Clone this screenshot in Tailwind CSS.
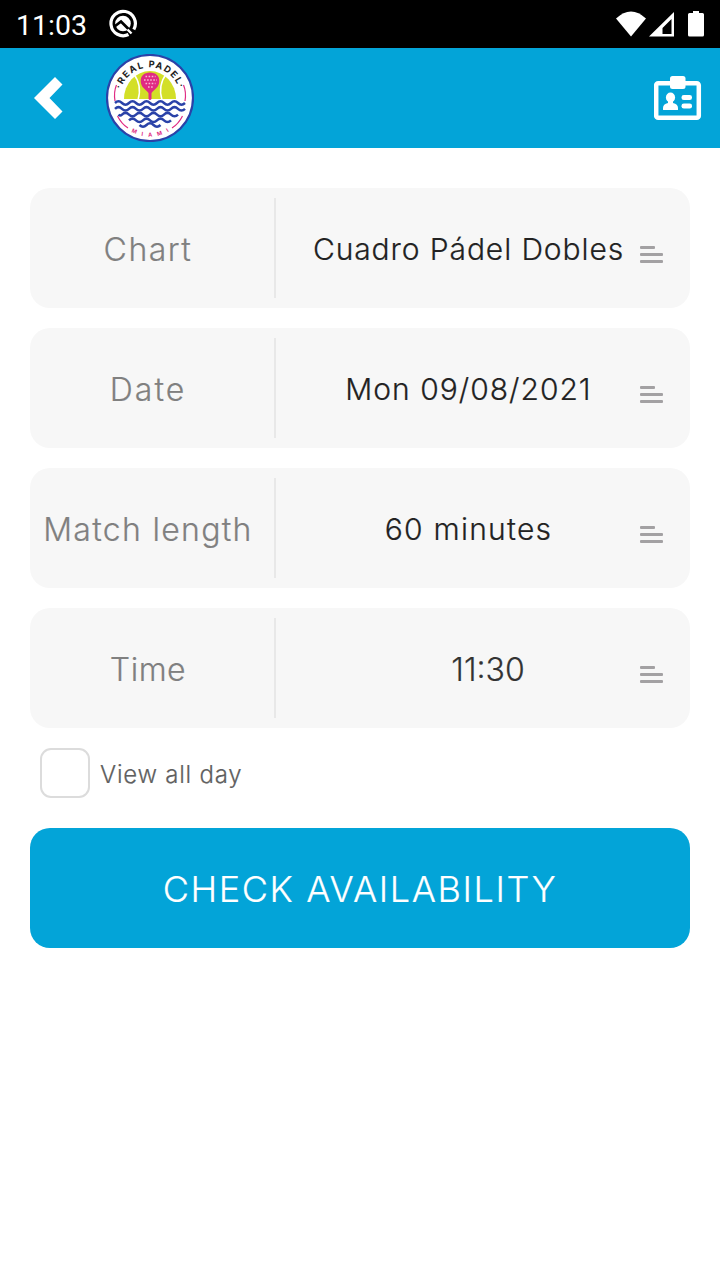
<!DOCTYPE html>
<html lang="en">
<head>
  <meta charset="UTF-8" />
  <meta name="viewport" content="width=device-width, initial-scale=1.0" />
  <title>Real Padel Miami</title>
  <script src="https://cdn.jsdelivr.net/npm/@tailwindcss/browser@4"></script>
</head>
<body class="bg-white min-h-screen flex flex-col font-['Inter',sans-serif]">
  <!-- Status bar -->
  <div class="h-12 bg-black flex items-center justify-between pl-4 pr-[14px] text-white">
    <div class="flex items-center">
      <span class="w-[92px] pt-[4px] text-[28.5px] leading-none font-['Roboto',sans-serif]">11:03</span>
      <svg class="w-[30px] h-[30px]" viewBox="0 0 30 30" fill="none">
        <path d="M20.500 25.500A12.200 12.200 0 1 1 25.800 20.500" stroke="#fff" stroke-width="3.200" />
        <circle cx="15" cy="14.500" r="7.800" fill="#fff" />
        <path d="M6.500 17.500L13 12.500L22 21.500" stroke="#000" stroke-width="2.800" />
        <path d="M19.500 20.500l4 4" stroke="#fff" stroke-width="2.400" />
      </svg>
    </div>
    <svg class="w-[90px] h-[28px]" viewBox="0 0 90 28" fill="#fff">
      <path d="M0 8.500Q15 -5.500 30 8.500L15 26.500z" />
      <path fill-rule="evenodd" d="M58 2V26.500H33zM55.500 9L46.500 18V24H55.500z" />
      <path d="M77 1h6v2h3.500q1.500 0 1.500 1.500V25q0 1.500-1.500 1.500h-13q-1.500 0-1.500-1.500V4.500q0-1.500 1.500-1.500H77z" />
    </svg>
  </div>

  <!-- App header -->
  <header class="h-[100px] bg-[#03a4d8] flex items-center pl-[34px] pr-[18px]">
    <svg class="w-[30px] h-[42px]" viewBox="0 0 30 42" fill="#fff">
      <path d="M21 0L28.500 7.500L15.500 21L28.500 34.500L21 42L0 21z" />
    </svg>
    <svg class="w-[88px] h-[88px] ml-[42px]" viewBox="0 0 88 88" fill="none">
      <defs>
        <path id="arcTop" d="M13.500 44A30.500 30.500 0 0 1 74.500 44" />
        <path id="arcBottom" d="M5.500 44A38.500 38.500 0 0 0 82.500 44" />
      </defs>
      <circle cx="44" cy="44" r="43" fill="#fff" stroke="#2a42a8" stroke-width="2.200" />
      <path d="M18 45A26 28 0 0 1 70 45z" fill="#d3df27" />
      <path d="M27 19Q36.500 31 32 46M61 19Q51.500 31 56 46" stroke="#fff" stroke-width="1.500" />
      <!-- racket -->
      <path d="M44 18.500c-6 0-9.300 3.500-9.300 8.500c0 6 4.500 8 7.800 12v6q1.500 2 3 0v-6c3.300-4 7.800-6 7.800-12c0-5-3.300-8.500-9.300-8.500z" fill="#e02a83" />
      <path d="M39.500 22.500h10M38 26h13M39.500 29.500h10M42 33h5" stroke="#f7b9d5" stroke-width="1.600" stroke-dasharray="1.600 1.500" />
      <!-- sea -->
      <g stroke="#2a42a8" stroke-width="2.500">
        <path d="M9 49q3.500-3.400 7 0t7 0t7 0t7 0t7 0t7 0t7 0t7 0t7 0t7 0" />
        <path d="M9 54.800q3.500-3.400 7 0t7 0t7 0t7 0t7 0t7 0t7 0t7 0t7 0t7 0" />
        <path d="M12.500 60.600q1.750 1.700 3.500 0q3.500-3.400 7 0t7 0t7 0t7 0t7 0t7 0t7 0t7 0" />
        <path d="M23 66.300q3.500-3.400 7 0t7 0t7 0t7 0t7 0t7 0" />
        <path d="M33.500 71q3.500 3.400 7 0t7 0t7 0" />
      </g>
      <path d="M10.500 31Q7.500 38 9 47M77.500 31Q80.500 38 79 47M11.500 62q4 8 10.500 12M76.500 62q-4 8-10.500 12" stroke="#e02a83" stroke-width="1.200" />
      <text class="font-['Inter',sans-serif] font-bold" font-size="9.200" fill="#222" text-anchor="middle" letter-spacing="1.400"><textPath href="#arcTop" startOffset="50%">·REAL PADEL·</textPath></text>
      <text class="font-['Inter',sans-serif] font-bold" font-size="5.500" fill="#e02a83" text-anchor="middle" letter-spacing="5.500"><textPath href="#arcBottom" startOffset="52.500%">MIAMI</textPath></text>
    </svg>
    <svg class="w-12 h-[46px] ml-auto" viewBox="0 0 48 46" fill="#fff">
      <rect x="2.200" y="8.200" width="42.600" height="34.600" rx="2" fill="none" stroke="#fff" stroke-width="4.500" />
      <rect x="16" y="1" width="15.500" height="13" rx="2.500" />
      <ellipse cx="16.500" cy="22.500" rx="4.600" ry="5" />
      <path d="M14 25h5v3q5 1 5 5v1.500q0 .500-.500 .500h-14q-.500 0-.500-.500V33q0-4 5-5z" />
      <rect x="27.500" y="20" width="10.500" height="5" rx="2.300" />
      <rect x="27.500" y="28.500" width="10.500" height="5" rx="2.300" />
    </svg>
  </header>

  <!-- Booking form -->
  <main class="px-[30px] pt-10">
    <div class="flex flex-col gap-5 font-light [-webkit-text-stroke:0.2px]">
      <div class="h-[120px] bg-[#f7f7f7] rounded-[20px] flex items-center">
        <div class="w-[246px] h-[100px] pt-[3px] pr-[8px] border-r-2 border-[#e8e8e8] flex items-center justify-center text-[32px] text-[#808080] whitespace-nowrap tracking-[1.500px]">Chart</div>
        <div class="w-[384px] pt-[2px] pl-[1px] flex justify-center text-[30px] text-[#222] whitespace-nowrap tracking-[0.900px]">Cuadro Pádel Dobles</div>
        <svg class="w-6 h-[18px] -ml-5 mt-[14px]" viewBox="0 0 24 18" fill="#a3a1a3"><rect y="0" width="15" height="3" rx="1" /><rect y="7" width="23" height="3" rx="1" /><rect y="14" width="23" height="3" rx="1" /></svg>
      </div>
      <div class="h-[120px] bg-[#f7f7f7] rounded-[20px] flex items-center">
        <div class="w-[246px] h-[100px] pt-[3px] pr-[8px] border-r-2 border-[#e8e8e8] flex items-center justify-center text-[32px] text-[#808080] whitespace-nowrap tracking-[2px]">Date</div>
        <div class="w-[384px] pt-[2px] pl-[1px] flex justify-center text-[30px] text-[#222] whitespace-nowrap tracking-[1px]">Mon 09/08/2021</div>
        <svg class="w-6 h-[18px] -ml-5 mt-[14px]" viewBox="0 0 24 18" fill="#a3a1a3"><rect y="0" width="15" height="3" rx="1" /><rect y="7" width="23" height="3" rx="1" /><rect y="14" width="23" height="3" rx="1" /></svg>
      </div>
      <div class="h-[120px] bg-[#f7f7f7] rounded-[20px] flex items-center">
        <div class="w-[246px] h-[100px] pt-[3px] pr-[8px] border-r-2 border-[#e8e8e8] flex items-center justify-center text-[32px] text-[#808080] whitespace-nowrap tracking-[1.300px]">Match length</div>
        <div class="w-[384px] pt-[2px] pl-[1px] flex justify-center text-[30px] text-[#222] whitespace-nowrap tracking-[1.250px]">60 minutes</div>
        <svg class="w-6 h-[18px] -ml-5 mt-[14px]" viewBox="0 0 24 18" fill="#a3a1a3"><rect y="0" width="15" height="3" rx="1" /><rect y="7" width="23" height="3" rx="1" /><rect y="14" width="23" height="3" rx="1" /></svg>
      </div>
      <div class="h-[120px] bg-[#f7f7f7] rounded-[20px] flex items-center">
        <div class="w-[246px] h-[100px] pt-[3px] pr-[8px] border-r-2 border-[#e8e8e8] flex items-center justify-center text-[32px] text-[#808080] whitespace-nowrap tracking-[0.500px]">Time</div>
        <div class="w-[384px] pt-[3px] pl-10 flex justify-center text-[32px] text-[#333] whitespace-nowrap">11:30</div>
        <svg class="w-6 h-[18px] -ml-5 mt-[14px]" viewBox="0 0 24 18" fill="#a3a1a3"><rect y="0" width="15" height="3" rx="1" /><rect y="7" width="23" height="3" rx="1" /><rect y="14" width="23" height="3" rx="1" /></svg>
      </div>
    </div>
    <div class="mt-5 pl-[10px] flex items-center">
      <div class="size-[50px] rounded-[11px] border-2 border-[#dcdcdc] bg-white"></div>
      <span class="ml-[10px] pt-[3px] text-2xl font-light text-[#606060] tracking-[0.750px] [-webkit-text-stroke:0.2px]">View all day</span>
    </div>
    <button class="mt-[30px] pt-[2px] w-full h-[120px] rounded-[20px] bg-[#03a4d8] text-white text-[36px] font-light whitespace-nowrap tracking-[1.600px] [-webkit-text-stroke:0.2px]">CHECK AVAILABILITY</button>
  </main>
</body>
</html>
